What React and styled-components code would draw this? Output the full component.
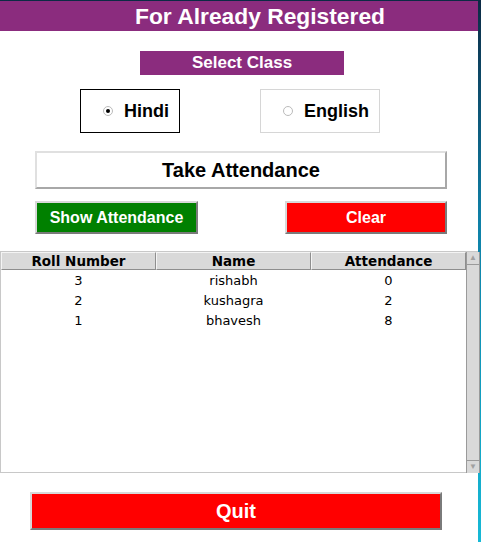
import React from 'react';
import styled, { createGlobalStyle } from 'styled-components';

const GlobalStyle = createGlobalStyle`
	body {
		margin: 0;
		background: #0b1f33;
	}
`;

const Screen = styled.div`
	display: flex;
	height: 542px;
	padding-top: 1px;
	box-sizing: border-box;
	background: linear-gradient(180deg, #0c2a44 0%, #0e7fa6 40%, #16b9d6 100%);
`;

const Window = styled.div`
	width: 478px;
	background: #fff;
	display: flex;
	flex-direction: column;
	align-items: center;
	font-family: 'Liberation Sans', Arial, sans-serif;
`;

const Header = styled.div`
	align-self: stretch;
	height: 30px;
	background: #8b2c7e;
	color: #fff;
	font-weight: bold;
	font-size: 22.8px;
	display: flex;
	align-items: center;
	justify-content: center;
	padding-left: 42px;
`;

const Label = styled.div`
	margin-top: 20px;
	margin-left: 6px;
	width: 204px;
	height: 24px;
	background: #8b2c7e;
	color: #fff;
	font-weight: bold;
	font-size: 17px;
	display: flex;
	align-items: center;
	justify-content: center;
`;

const RadioRow = styled.div`
	margin-top: 14px;
	display: flex;
	gap: 80px;
	margin-left: -18px;
`;

const RadioBox = styled.label`
	width: ${(p) => p.$w}px;
	height: 44px;
	box-sizing: border-box;
	border: 1px solid ${(p) => (p.$active ? '#000' : '#d6d6d6')};
	display: flex;
	align-items: center;
	justify-content: center;
	gap: 11px;
	padding-left: 12px;
	font-weight: bold;
	font-size: 18px;
	color: #000;
`;

const Dot = styled.span`
	width: 8px;
	height: 8px;
	border-radius: 50%;
	border: 1px solid #bbb;
	background: #fff;
	display: flex;
	align-items: center;
	justify-content: center;
	&::after {
		content: '';
		width: 4px;
		height: 4px;
		border-radius: 50%;
		background: ${(p) => (p.$on ? '#000' : 'transparent')};
	}
`;

const Entry = styled.div`
	margin-top: 18px;
	margin-left: 4px;
	width: 412px;
	height: 38px;
	box-sizing: border-box;
	border: 2px solid;
	border-color: #e0e0e0 #a8a8a8 #a8a8a8 #e0e0e0;
	display: flex;
	align-items: center;
	justify-content: center;
	font-weight: bold;
	font-size: 20px;
	color: #000;
`;

const ButtonRow = styled.div`
	margin-top: 12px;
	margin-left: 4px;
	width: 412px;
	display: flex;
	justify-content: space-between;
`;

const Button = styled.button`
	width: ${(p) => p.$w}px;
	height: ${(p) => p.$h || 33}px;
	box-sizing: border-box;
	border: 2px solid;
	border-color: #d8d8d8 #7a7a7a #7a7a7a #d8d8d8;
	background: ${(p) => p.$bg};
	color: #fff;
	font-family: 'Liberation Sans', Arial, sans-serif;
	font-weight: bold;
	font-size: ${(p) => p.$size || 16}px;
	padding: 0;
`;

const TableWrap = styled.div`
	align-self: stretch;
	margin-top: 17px;
	height: 221px;
	display: flex;
	border-top: 1px solid #c8c8c8;
`;

const Table = styled.div`
	flex: 1;
	border-left: 1px solid #c8c8c8;
	border-bottom: 1px solid #c8c8c8;
	font-family: 'DejaVu Sans', sans-serif;
	font-size: 13px;
	color: #000;
`;

const Row = styled.div`
	display: grid;
	grid-template-columns: 155px 155px 155px;
	height: ${(p) => (p.$head ? 18 : 20)}px;
	align-items: center;
	text-align: center;
`;

const HeadCell = styled.div`
	height: 18px;
	box-sizing: border-box;
	background: #d9d9d9;
	border: 1px solid;
	border-color: #f4f4f4 #8e8e8e #8e8e8e #f4f4f4;
	font-weight: bold;
	font-size: 13.5px;
	line-height: 16px;
`;

const Scrollbar = styled.div`
	width: 12px;
	background: #d9d9d9;
	border-left: 1px solid #9a9a9a;
	border-right: 1px solid #9a9a9a;
	display: flex;
	flex-direction: column;
	justify-content: space-between;
	align-items: center;
	color: #a0a0a0;
	font-size: 8px;
	line-height: 12px;
`;

const Arrow = styled.span`
	width: 12px;
	height: 12px;
	display: flex;
	align-items: center;
	justify-content: center;
	border-bottom: ${(p) => (p.$up ? '1px solid #9a9a9a' : 'none')};
	border-top: ${(p) => (p.$up ? 'none' : '1px solid #9a9a9a')};
`;

const QuitWrap = styled.div`
	margin-top: 19px;
	margin-left: -6px;
`;

const rows = [
	['3', 'rishabh', '0'],
	['2', 'kushagra', '2'],
	['1', 'bhavesh', '8'],
];

const App = () => {
	return (
		<Screen>
			<GlobalStyle />
			<Window>
				<Header>For Already Registered</Header>
				<Label>Select Class</Label>
				<RadioRow>
					<RadioBox $w={100} $active>
						<Dot $on />
						Hindi
					</RadioBox>
					<RadioBox $w={120}>
						<Dot />
						English
					</RadioBox>
				</RadioRow>
				<Entry>Take Attendance</Entry>
				<ButtonRow>
					<Button $w={163} $bg='#008000'>Show Attendance</Button>
					<Button $w={162} $bg='#ff0000'>Clear</Button>
				</ButtonRow>
				<TableWrap>
					<Table>
						<Row $head>
							<HeadCell>Roll Number</HeadCell>
							<HeadCell>Name</HeadCell>
							<HeadCell>Attendance</HeadCell>
						</Row>
						{rows.map((r) => (
							<Row key={r[0]}>
								<div>{r[0]}</div>
								<div>{r[1]}</div>
								<div>{r[2]}</div>
							</Row>
						))}
					</Table>
					<Scrollbar>
						<Arrow $up>▲</Arrow>
						<Arrow>▼</Arrow>
					</Scrollbar>
				</TableWrap>
				<QuitWrap>
					<Button $w={412} $h={38} $size={20} $bg='#ff0000'>Quit</Button>
				</QuitWrap>
			</Window>
		</Screen>
	);
};

export default App;
